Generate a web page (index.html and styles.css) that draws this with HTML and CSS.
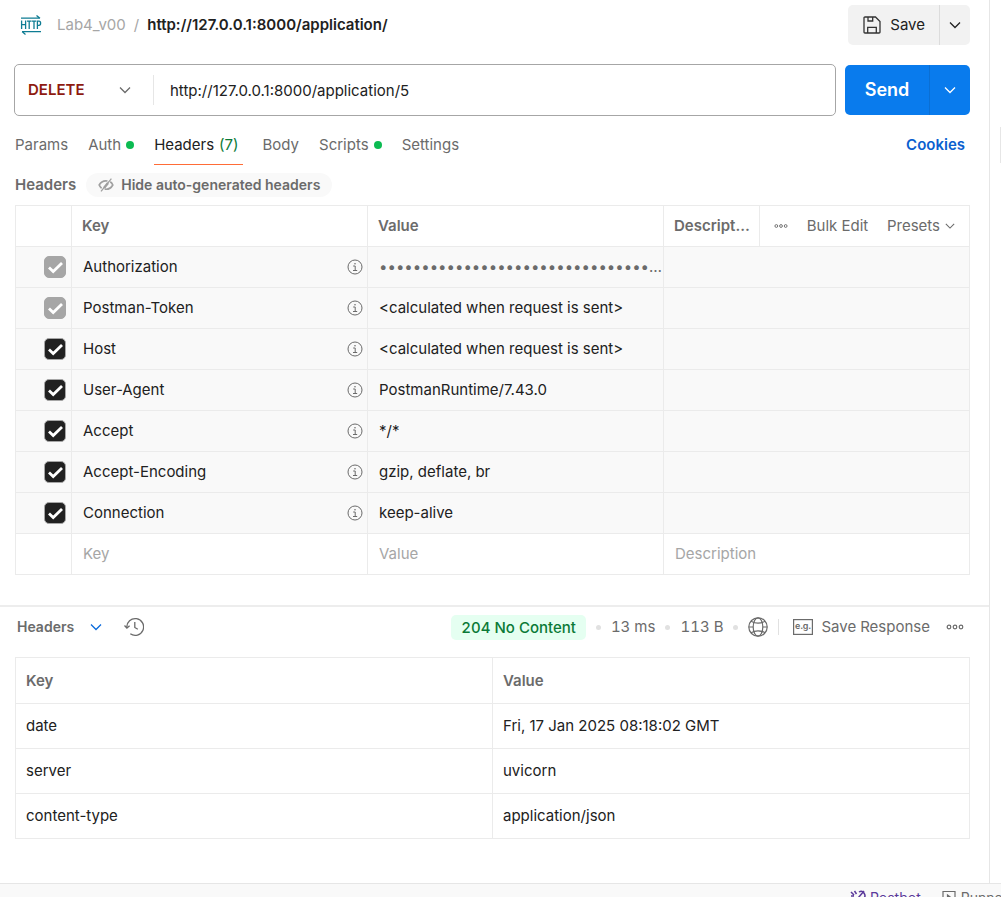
FILE: index.html
```html
<!DOCTYPE html>
<html lang="en">
<head>
<meta charset="utf-8">
<meta name="viewport" content="width=device-width, initial-scale=1">
<title>http://127.0.0.1:8000/application/</title>
<link rel="stylesheet" href="styles.css">
</head>
<body>
<svg class="sprite" aria-hidden="true">
  <symbol id="chevron" viewBox="0 0 12 12"><path d="M1 3.5 6 8.5 11 3.5" fill="none" stroke="currentColor" stroke-width="1.3"/></symbol>
  <symbol id="info" viewBox="0 0 16 16"><circle cx="8" cy="8" r="7" fill="none" stroke="currentColor"/><path d="M6.2 7H8.2V11.2M6 11.5H10.2" fill="none" stroke="currentColor"/><circle cx="8" cy="4.8" r=".8" fill="currentColor"/></symbol>
  <symbol id="dots" viewBox="0 0 18 6"><g fill="none" stroke="currentColor" stroke-width="1.2"><circle cx="3" cy="3" r="1.8"/><circle cx="9" cy="3" r="1.8"/><circle cx="15" cy="3" r="1.8"/></g></symbol>
</svg>
<div class="workspace">
  <main class="main">
    <section class="request">
      <header class="titlebar">
        <svg class="http-icon" viewBox="0 0 22 20" role="img" aria-label="HTTP request"><g fill="none" stroke="#0e7c93" stroke-width="1.3"><path d="M1 3.2H20M16.5 .5 20 3.2"/><path d="M21 16.6H2M2 16.6 5.5 19.4"/><path d="M1.6 5.5V14M5.6 5.5V14M1.6 9.6H5.6M7 6.1H11.4M9.2 6.1V14M11.8 6.1H16.2M14 6.1V14M17.4 14V6.1H19Q20.6 6.1 20.6 8.2 20.6 10.3 19 10.3H17.4"/></g></svg>
        <nav class="crumbs"><a class="crumb" href="#">Lab4_v00</a><span class="slash">/</span><h1 class="name">http://127.0.0.1:8000/application/</h1></nav>
        <div class="save">
          <button class="save-main"><svg class="icon18" viewBox="0 0 18 18"><g fill="none" stroke="#333" stroke-width="1.3"><path d="M2 1H12.5L17 5.5V16.2Q17 17 16 17H2Q1 17 1 16.2V1.8Q1 1 2 1Z"/><path d="M4.7 17V11.3H13.3V17M5 1V5H9.7V1"/></g></svg>Save</button>
          <button class="save-more" aria-label="More save options"><svg class="chev"><use href="#chevron"/></svg></button>
        </div>
      </header>
      <form class="urlrow">
        <div class="urlbox">
          <select class="method" aria-label="Method"><option>DELETE</option></select>
          <input class="url" type="text" aria-label="Request URL" value="http://127.0.0.1:8000/application/5">
        </div>
        <div class="send">
          <button class="send-main" type="button">Send</button>
          <button class="send-more" type="button" aria-label="More send options"><svg class="chev"><use href="#chevron"/></svg></button>
        </div>
      </form>
      <nav class="tabs">
        <button class="tab">Params</button>
        <button class="tab">Auth<i class="on"></i></button>
        <button class="tab active">Headers <span class="count">(7)</span></button>
        <button class="tab">Body</button>
        <button class="tab">Scripts<i class="on"></i></button>
        <button class="tab">Settings</button>
        <a class="cookies" href="#">Cookies</a>
      </nav>
      <div class="subhead">
        <h2 class="label">Headers</h2>
        <button class="pill"><svg class="eye" viewBox="0 0 16 14"><g fill="none" stroke="#a0a0a0" stroke-width="1.7"><path d="M9.5 3Q4 2 1.2 7 2 9 3.6 10.2M12.2 3.8Q14 5 14.8 7 12 12 6.7 11.1"/><path d="M10 5 6 10" stroke-width="2.4"/><path d="M13.4 .7 3 13.3" stroke-width="1.3"/></g></svg>Hide auto-generated headers</button>
      </div>
      <table class="grid headers">
        <colgroup><col class="c-check"><col><col><col class="c-desc"><col class="c-tools"></colgroup>
        <thead>
          <tr><th></th><th>Key</th><th>Value</th><th class="clip">Description</th>
          <td class="tools"><div class="toolset"><button class="plain" aria-label="Columns"><svg class="dots-s"><use href="#dots"/></svg></button><button class="plain">Bulk Edit</button><button class="plain presets">Presets<svg class="chev-s"><use href="#chevron"/></svg></button></div></td></tr>
        </thead>
        <tbody>
          <tr class="auto"><td class="check"><input type="checkbox" checked disabled aria-label="Authorization"></td><td><div class="key">Authorization<svg class="info"><use href="#info"/></svg></div></td><td class="secret">••••••••••••••••••••••••••••••••••••••••••••</td><td colspan="2"></td></tr>
          <tr class="auto"><td class="check"><input type="checkbox" checked disabled aria-label="Postman-Token"></td><td><div class="key">Postman-Token<svg class="info"><use href="#info"/></svg></div></td><td>&lt;calculated when request is sent&gt;</td><td colspan="2"></td></tr>
          <tr class="auto"><td class="check"><input type="checkbox" checked aria-label="Host"></td><td><div class="key">Host<svg class="info"><use href="#info"/></svg></div></td><td>&lt;calculated when request is sent&gt;</td><td colspan="2"></td></tr>
          <tr class="auto"><td class="check"><input type="checkbox" checked aria-label="User-Agent"></td><td><div class="key">User-Agent<svg class="info"><use href="#info"/></svg></div></td><td>PostmanRuntime/7.43.0</td><td colspan="2"></td></tr>
          <tr class="auto"><td class="check"><input type="checkbox" checked aria-label="Accept"></td><td><div class="key">Accept<svg class="info"><use href="#info"/></svg></div></td><td>*/*</td><td colspan="2"></td></tr>
          <tr class="auto"><td class="check"><input type="checkbox" checked aria-label="Accept-Encoding"></td><td><div class="key">Accept-Encoding<svg class="info"><use href="#info"/></svg></div></td><td>gzip, deflate, br</td><td colspan="2"></td></tr>
          <tr class="auto"><td class="check"><input type="checkbox" checked aria-label="Connection"></td><td><div class="key">Connection<svg class="info"><use href="#info"/></svg></div></td><td>keep-alive</td><td colspan="2"></td></tr>
          <tr><td></td><td><input class="entry" placeholder="Key" aria-label="Key"></td><td><input class="entry" placeholder="Value" aria-label="Value"></td><td colspan="2"><input class="entry" placeholder="Description" aria-label="Description"></td></tr>
        </tbody>
      </table>
    </section>
    <section class="response">
      <header class="respbar">
        <button class="plain view">Headers<svg class="chev"><use href="#chevron"/></svg></button>
        <button class="plain" aria-label="History"><svg class="history" viewBox="0 0 20 20"><g fill="none" stroke="#6b6b6b" stroke-width="1.3"><path d="M2.8 10.5A8.4 8.4 0 1 1 6.3 16.8"/><path d="M.5 8.5 2.9 11 5.6 8.8M10.8 5V10.5L13.8 12.3"/></g></svg></button>
        <div class="meta">
          <span class="status">204 No Content</span><i class="sep"></i><span>13 ms</span><i class="sep"></i><span>113 B</span><i class="sep"></i>
          <svg class="globe" viewBox="0 0 20 20" role="img" aria-label="Network"><g fill="none" stroke="#6b6b6b" stroke-width="1.2"><circle cx="10" cy="10" r="9.2"/><ellipse cx="10" cy="10" rx="4.8" ry="9.2"/><path d="M3 4.2Q10 8.2 17 4.2M3 15.8Q10 11.8 17 15.8M.8 10H5M15 10H19.2"/></g></svg>
          <button class="plain example"><svg class="eg" viewBox="0 0 20 16" aria-hidden="true"><rect x=".6" y=".6" width="18.8" height="14.8" fill="none" stroke="#6b6b6b" stroke-width="1.2"/><text class="egtext" x="10" y="10" text-anchor="middle">e.g.</text></svg>Save Response</button>
          <button class="plain" aria-label="More"><svg class="dots"><use href="#dots"/></svg></button>
        </div>
      </header>
      <table class="grid result">
        <thead><tr><th>Key</th><th>Value</th></tr></thead>
        <tbody>
          <tr><td>date</td><td>Fri, 17 Jan 2025 08:18:02 GMT</td></tr>
          <tr><td>server</td><td>uvicorn</td></tr>
          <tr><td>content-type</td><td>application/json</td></tr>
        </tbody>
      </table>
    </section>
  </main>
  <aside class="rail"><div class="handle"></div></aside>
</div>
<footer class="footer">
  <button class="foot bot"><svg class="foot-icon" viewBox="0 0 16 16"><g fill="none" stroke="#5b3a9b" stroke-width="1.5"><path d="M1 2 4 5M4.5 1 6.5 4M1 6H4M14 1 3 14M9 2Q12 0 14 3T14 8M7 13Q11 14 13 10"/></g></svg>Postbot</button>
  <button class="foot"><svg class="foot-icon" viewBox="0 0 16 16"><path d="M2 1.5H14V14H2ZM6.5 5 10.5 8 6.5 11Z" fill="none" stroke="#6b6b6b" stroke-width="1.2"/></svg>Runner</button>
</footer>
</body>
</html>
```
FILE: styles.css
```css
* { box-sizing: border-box; }
body {
  margin: 0;
  height: 100vh;
  overflow: hidden;
  display: flex;
  flex-direction: column;
  background: #fff;
  color: #212121;
  font-family: Inter, "Liberation Sans", sans-serif;
  font-size: 15px;
  line-height: 20px;
}
button, input, select {
  font: inherit;
  color: inherit;
  margin: 0;
  padding: 0;
  border: 0;
  background: none;
}
button { display: flex; align-items: center; cursor: pointer; white-space: nowrap; }
a { text-decoration: none; }
svg { flex: none; display: block; }
.sprite { position: absolute; width: 0; height: 0; }
.chev { width: 12px; height: 12px; }
.chev-s { width: 10px; height: 10px; }

.workspace { flex: 1 0 auto; display: flex; }
.main { flex: 1; min-width: 0; border-right: 1px solid #e6e6e6; }
.rail { width: 11px; display: flex; justify-content: flex-end; }
.handle { width: 1px; height: 36px; margin-top: 127px; background: #e6e6e6; }

.request { padding: 5px 19px 30px 15px; border-bottom: 2px solid #ededed; }
.titlebar { display: flex; align-items: center; height: 40px; padding-left: 5px; }
.http-icon { width: 22px; height: 20px; }
.crumbs { flex: 1; display: flex; align-items: center; gap: 8px; padding-left: 15px; }
.crumb, .slash { color: #a6a6a6; }
.name { margin: 0; font-size: 15px; font-weight: 600; }
.save { display: flex; height: 40px; border-radius: 5px; background: #f2f2f2; overflow: hidden; }
.save-main { gap: 9px; padding: 0 14px 0 15px; }
.save-more { width: 31px; justify-content: center; border-left: 1px solid #dcdcdc; }
.icon18 { width: 18px; height: 18px; }

.urlrow { display: flex; align-items: center; gap: 9px; margin: 19px 0 0 -1px; }
.urlbox { flex: 1; display: flex; align-items: center; height: 52px; border: 1px solid #a6a6a6; border-radius: 5px; }
.method {
  appearance: none;
  width: 139px;
  height: 30px;
  padding-left: 13px;
  border-right: 1px solid #e6e6e6;
  color: #8e1a10;
  font-weight: 600;
  background: url("data:image/svg+xml,%3Csvg xmlns='http://www.w3.org/2000/svg' width='12' height='12'%3E%3Cpath d='M1 3.5 6 8.5 11 3.5' fill='none' stroke='%236b6b6b' stroke-width='1.3'/%3E%3C/svg%3E") no-repeat 104px center;
}
.url { flex: 1; height: 30px; padding-left: 16px; }
.send { display: flex; height: 50px; border-radius: 5px; background: #097bed; color: #fff; overflow: hidden; }
.send-main { width: 84px; justify-content: center; font-size: 18px; font-weight: 600; }
.send-more { width: 41px; justify-content: center; border-left: 1px solid #0a6fd4; }

.tabs { display: flex; align-items: stretch; gap: 20px; height: 40px; margin-top: 9px; color: #6b6b6b; }
.tab { border-bottom: 1px solid transparent; }
.tab.active { color: #212121; border-color: #ff6c37; padding-right: 4px; }
.count { margin-left: 5px; color: #0b7a37; }
.on { width: 8px; height: 8px; margin-left: 5px; border-radius: 50%; background: #0cbb52; }
.cookies { margin-left: auto; align-self: center; padding-right: 5px; color: #0b5fcf; font-weight: 600; }

.subhead { display: flex; align-items: center; gap: 10px; height: 24px; margin: 8px 0; color: #6b6b6b; }
.label { margin: 0; font-size: 15px; font-weight: 600; }
.pill { gap: 7px; height: 24px; padding: 0 12px; border-radius: 12px; background: #f9f9f9; font-size: 14px; font-weight: 600; }
.eye { width: 16px; height: 14px; }

.grid { width: 100%; border-collapse: collapse; table-layout: fixed; }
.grid th, .grid td { height: 41px; border: 1px solid #ebebeb; padding: 0 10px; text-align: left; white-space: nowrap; }
.grid th { color: #6b6b6b; font-weight: 600; }
.c-check { width: 56px; }
.c-desc { width: 96px; }
.c-tools { width: 210px; }
.headers td { padding: 0 4px 0 11px; }
.headers .clip, .headers .secret { overflow: hidden; text-overflow: ellipsis; }
.headers .clip { padding-right: 6px; }
.headers .secret { padding-right: 0; color: #6b6b6b; }
.auto { background: #f9f9f9; }
.headers .tools { padding: 0 14px; }
.toolset { display: flex; align-items: center; justify-content: space-between; }
.plain { color: #6b6b6b; }
.presets { gap: 5px; }
.dots-s { width: 14px; height: 6px; }
.dots { width: 20px; height: 6px; }
.headers .check { padding: 0 5px; }
.check input {
  appearance: none;
  display: block;
  width: 22px;
  height: 22px;
  margin-left: auto;
  border: 1px solid #a6a6a6;
  border-radius: 5px;
  background: #212121 url("data:image/svg+xml,%3Csvg xmlns='http://www.w3.org/2000/svg' width='20' height='20'%3E%3Cpath d='M4 10.5 8.2 14.5 17 6' fill='none' stroke='white' stroke-width='2.8'/%3E%3C/svg%3E") center no-repeat;
}
.check input:disabled { background-color: #a6a6a6; }
.key { display: flex; align-items: center; justify-content: space-between; }
.info { width: 16px; height: 16px; color: #6b6b6b; }
.entry { display: block; width: 100%; }
.entry::placeholder { color: #a6a6a6; opacity: 1; }

.response { padding: 0 19px 44px 15px; }
.respbar { display: flex; align-items: center; gap: 22px; height: 40px; margin-bottom: 10px; padding: 0 5px 0 2px; }
.view { gap: 16px; font-size: 14px; font-weight: 600; }
.view .chev { color: #0b6bdc; }
.history { width: 20px; height: 20px; }
.meta { flex: 1; display: flex; align-items: center; justify-content: flex-end; gap: 10px; color: #6b6b6b; font-variant-numeric: tabular-nums; }
.status { padding: 2px 10px; border-radius: 5px; background: #e5fff1; color: #0b7a37; font-weight: 500; line-height: 21px; }
.sep { width: 5px; height: 5px; border-radius: 50%; background: #e1e1e1; }
.globe { width: 20px; height: 20px; }
.example { gap: 8px; margin-right: 5px; }
.example::before { content: ""; width: 1px; height: 16px; margin-right: 6px; background: #e1e1e1; }
.eg { width: 20px; height: 16px; }
.egtext { font-size: 9px; font-weight: 600; fill: #6b6b6b; }
.result td { height: 45px; }
.result th { height: 46px; }

.footer { flex: none; display: flex; justify-content: flex-end; gap: 20px; height: 29px; margin-right: -7px; border-top: 1px solid #e6e6e6; background: #f9f9f9; color: #6b6b6b; font-size: 14px; }
.foot { gap: 4px; }
.bot { color: #5b3a9b; }
.foot-icon { width: 16px; height: 16px; }
```
